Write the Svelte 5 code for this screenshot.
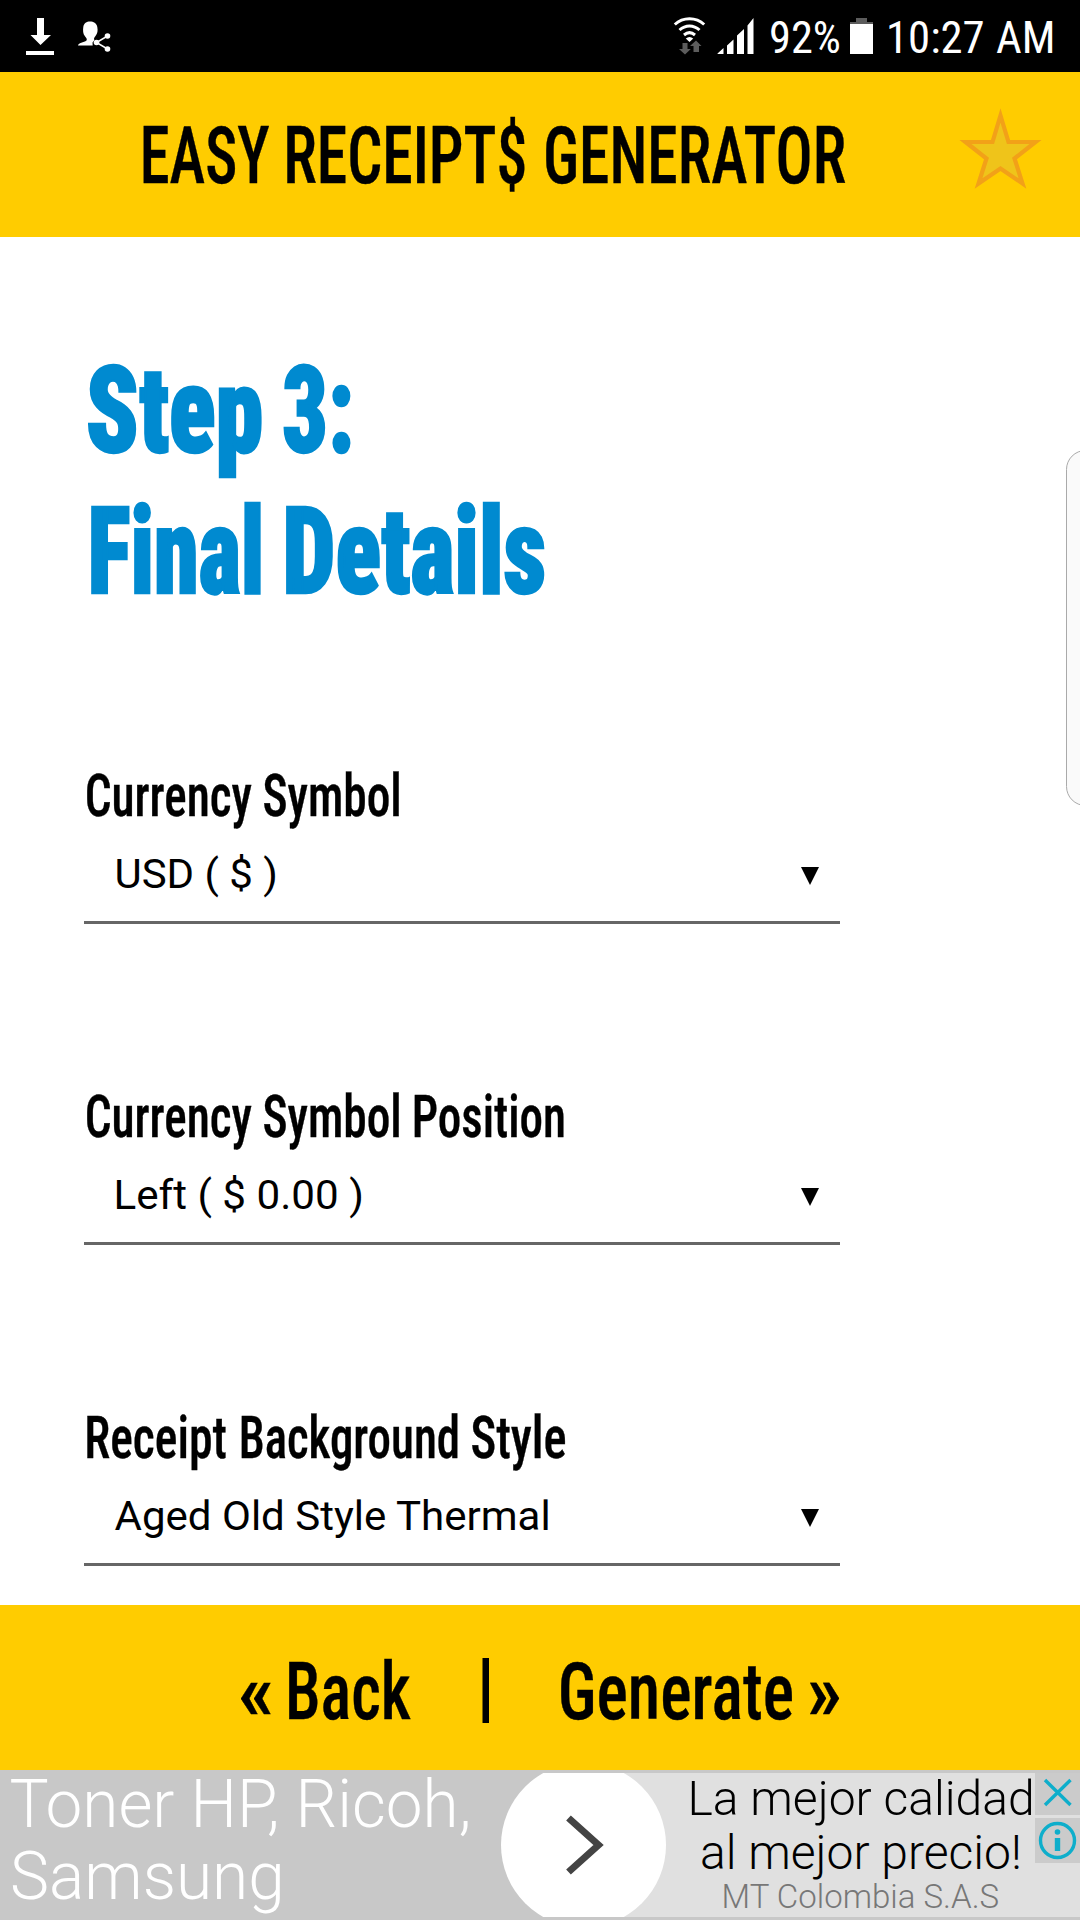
<script>
  // Shared canvas used to measure glyph ink so words can be condensed to a set width.
  const ctx = document.createElement('canvas').getContext('2d');

  function fit([text, left, right], size, weight, condensed) {
    ctx.font = `${weight} ${size}px Roboto`;
    ctx.fontStretch = condensed ? 'condensed' : 'normal';
    const m = ctx.measureText(text);
    const scale = (right - left) / (m.actualBoundingBoxRight + m.actualBoundingBoxLeft);
    return { text, x: left + m.actualBoundingBoxLeft * scale, scale };
  }

  const fields = [
    {
      label: [['Currency', 3, 168], ['Symbol', 180, 315]],
      value: [['USD ( $ )', 32.5, 191.5]]
    },
    {
      label: [['Currency', 3, 168], ['Symbol', 180, 315], ['Position', 330, 479.5]],
      value: [['Left ( $ 0.00 )', 32.5, 277.5]]
    },
    {
      label: [['Receipt', 3.5, 142], ['Background', 157, 374], ['Style', 388, 481.5]],
      value: [['Aged Old Style Thermal', 30.5, 464.5]]
    }
  ];
</script>

{#snippet line(words, size, weight, baseline, condensed)}
  {#each words as word}
    {@const w = fit(word, size, weight, condensed)}
    <text
      class:condensed
      transform={`translate(${w.x} ${baseline}) scale(${w.scale} 1)`}
      font-size={size}
      font-weight={weight}>{w.text}</text>
  {/each}
{/snippet}

<div class="screen">
  <div class="status">
    <div class="notices">
      <svg class="download" width="28" height="38" viewBox="0 0 28 38">
        <path d="M11 0h7v17h7L14.500 27 4.500 17H11zM0 33h28v4H0z" />
      </svg>
      <svg class="share" width="33" height="32" viewBox="0 0 33 32">
        <path d="M0 24.500C0 22 6 21.500 8.500 19.500C9.500 18 8 16.500 6.800 15C5 13 4.800 9 5.300 6C6 2 8.500 0.500 12 0.500S18.500 2 19.300 6C20 10 19.500 12.500 17.500 15C16 17 15.500 18 16.500 19L14.500 21.500L14.700 24.500z" />
        <circle cx="18.500" cy="21.500" r="2.800" /><circle cx="29.500" cy="15" r="2.800" /><circle cx="29.500" cy="28" r="2.800" />
        <path class="link" d="M29.500 15L18.500 21.500L29.500 28" />
      </svg>
    </div>
    <svg class="readings" width="406" height="72" viewBox="0 0 406 72">
      <g class="wifi">
        <path d="M.8 24.500C9 16.800 22 16.800 30.200 24.500" />
        <path d="M5.500 30C11.500 24.500 19.500 24.500 25.500 30" />
        <path d="M10 35C13.500 32 17.500 32 21 35" />
      </g>
      <path d="M11.800 38.500Q15.500 35.500 19.200 38.500L15.500 42z" />
      <path class="dim" d="M8.500 43h5v6h3.300L11 54.500 5 49h3.500zM19.500 52v-6H16l6-5.500 5.500 5.500H25v6z" />
      <path d="M43.500 54v-.5l6-5.500v6zM53 54V45.500l6.500-6V54zM63 54V35.500l7-6.500v25zM73.500 54V25.500l6-7.500v36z" />
      {@render line([['92%', 97, 165.500]], 45, 400, 53, true)}
      <path class="dim" d="M182 18h11v4h6v3h-23v-3h6z" />
      <path d="M176 24h23v30h-23z" />
      {@render line([['10:27', 215, 309.500], ['AM', 322, 378.500]], 45, 400, 53, true)}
    </svg>
  </div>

  <header>
    <svg width="1080" height="165" viewBox="0 0 1080 165">
      {@render line([['EASY', 143.500, 269], ['RECEIPT$', 287, 525], ['GENERATOR', 546, 845]], 80, 500, 111, true)}
      <path class="star" d="M1000.500 43.500L1008.500 70H1035.500L1014.500 86.500L1022.500 111.500L1000.500 96.500L978.500 111.500L986.500 86.500L965.500 70H992.500z" />
    </svg>
  </header>

  <main>
    <svg class="heading" width="600" height="526" viewBox="0 0 600 526">
      {@render line([['Step', 5, 177], ['3:', 200.500, 266]], 121, 900, 214.500, true)}
      {@render line([['Final', 7.500, 176], ['Details', 202.500, 460]], 121, 900, 356, true)}
    </svg>
    {#each fields as field}
      <section>
        <svg width="756" height="75" viewBox="0 0 756 75">
          {@render line(field.label, 60, 500, 52.500, true)}
        </svg>
        <div class="select">
          <svg width="756" height="83" viewBox="0 0 756 83">
            {@render line(field.value, 41.500, 400, 49.500, false)}
            <path d="M717 29h18l-9 18z" />
          </svg>
        </div>
      </section>
    {/each}
    <div class="edge"></div>
  </main>

  <nav>
    <svg width="1080" height="165" viewBox="0 0 1080 165">
      {@render line([['«', 241, 270.500], ['Back', 289, 410.500]], 80, 500, 114, true)}
      <path d="M482.500 53h6.500v65h-6.500z" />
      {@render line([['Generate', 561, 792.500], ['»', 809.500, 839]], 80, 500, 114, true)}
    </svg>
  </nav>

  <footer>
    <svg width="1080" height="150" viewBox="0 0 1080 150">
      <clipPath id="banner"><path d="M0 3h1080v144H0z" /></clipPath>
      <path class="panel" d="M583 3h497v144H583z" />
      <circle class="disc" cx="583.500" cy="75" r="82.500" clip-path="url(#banner)" />
      <path class="chevron" d="M568.500 48L598.500 75L568.500 102" />
      <g class="white">
        {@render line([['Toner HP, Ricoh,', 10.500, 467.500]], 67.500, 300, 57, false)}
        {@render line([['Samsung', 12, 280.500]], 67.500, 300, 129, false)}
      </g>
      {@render line([['La mejor calidad', 691.500, 1031]], 48, 300, 45, false)}
      {@render line([['al mejor precio!', 702, 1019]], 48, 300, 99, false)}
      <g class="grey">{@render line([['MT Colombia S.A.S', 724.500, 999]], 33.500, 300, 138, false)}</g>
      <path class="chip" d="M1035 3h45v42h-45zM1035 48h45v45h-45z" />
      <g class="teal">
        <path d="M1045 10L1070.500 35M1070.500 10L1045 35" />
        <circle cx="1057.500" cy="70.500" r="17" />
      </g>
      <circle class="tealfill" cx="1057.500" cy="62" r="2.800" />
      <path class="tealfill" d="M1054.800 68h5.400v13h-5.400z" />
    </svg>
  </footer>
</div>

<style>
  :global(body) { background: #fff; }
  .screen {
    width: 1080px;
    height: 1920px;
    display: flex;
    flex-direction: column;
    overflow: hidden;
    background: #fff;
    font-family: Roboto, sans-serif;
    color: #000;
  }
  svg { display: block; flex: none; overflow: visible; }
  .condensed { font-stretch: condensed; }
  .status {
    height: 72px;
    display: flex;
    justify-content: space-between;
    background: #000;
    fill: #fff;
  }
  .notices { display: flex; gap: 24px; padding-left: 26px; }
  .download { margin-top: 18px; }
  .share { margin-top: 21px; }
  .link { fill: none; stroke: #fff; stroke-width: 1.5; }
  .wifi { fill: none; stroke: #fff; stroke-width: 3; }
  .dim { fill: #5c5c5c; }
  header { height: 165px; background: #fc0; }
  header text, nav text, section svg text.condensed { stroke: #000; stroke-width: 0.4; }
  .star { fill: #efc41a; stroke: #f2a118; stroke-width: 4.2; }
  main {
    position: relative;
    height: 1368px;
    box-sizing: border-box;
    padding-left: 84px;
    overflow: hidden;
  }
  .heading { fill: #008ad0; stroke: #008ad0; stroke-width: 2.4; }
  section { height: 321px; }
  .select { width: 756px; border-bottom: 3px solid #666; }
  .edge {
    position: absolute;
    top: 213px;
    right: -25px;
    width: 37px;
    height: 354px;
    border: 1px solid #aaa;
    border-radius: 22px;
    background: #fafafa;
  }
  nav { height: 165px; background: #fc0; }
  footer { height: 150px; background: #c8c8c8; }
  .panel { fill: #e0e0e0; }
  .disc, .white { fill: #fff; }
  .grey { fill: #777; }
  .chevron { fill: none; stroke: #444; stroke-width: 7; }
  .chip { fill: #cbcbcb; }
  .teal { fill: none; stroke: #0eaecb; stroke-width: 3.4; }
  .tealfill { fill: #0eaecb; }
</style>
